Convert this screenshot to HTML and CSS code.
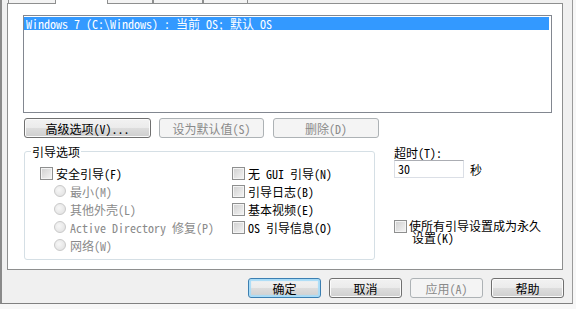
FILE: index.html
```html
<!DOCTYPE html>
<html lang="zh-CN">
<head>
  <meta charset="UTF-8" />
  <title>系统配置 - 引导</title>
  <link rel="stylesheet" href="styles.css">
</head>
<body>
  <div class="window">
    <div class="tabs">
      <span class="tab t1"></span>
      <span class="tab active"></span>
      <span class="tab t3"></span>
      <span class="tab t4"></span>
      <span class="tab t5"></span>
    </div>

    <div class="panel">
      <div class="oslist">
        <div class="osrow">Windows 7 (C:\Windows) : 当前 OS; 默认 OS</div>
      </div>

      <div class="listbtns">
        <button class="btn b-adv">高级选项(V)...</button>
        <button class="btn b-def" disabled>设为默认值(S)</button>
        <button class="btn b-del" disabled>删除(D)</button>
      </div>

      <div class="lower">
        <fieldset class="group">
          <legend>引导选项</legend>
          <div class="opts">
            <div class="col">
              <label class="chk"><span class="box"></span>安全引导(F)</label>
              <label class="rad"><span class="dot"></span>最小(M)</label>
              <label class="rad"><span class="dot"></span>其他外壳(L)</label>
              <label class="rad"><span class="dot"></span>Active Directory 修复(P)</label>
              <label class="rad"><span class="dot"></span>网络(W)</label>
            </div>
            <div class="col">
              <label class="chk"><span class="box"></span>无 GUI 引导(N)</label>
              <label class="chk"><span class="box"></span>引导日志(B)</label>
              <label class="chk"><span class="box"></span>基本视频(E)</label>
              <label class="chk"><span class="box"></span>OS 引导信息(O)</label>
            </div>
          </div>
        </fieldset>

        <div class="side">
          <div class="tlabel">超时(T):</div>
          <div class="trow">
            <span class="tinput">30</span>
            <span class="unit">秒</span>
          </div>
          <label class="chk perm"><span class="box"></span><span class="ptext">使所有引导设置成为永久设置(K)</span></label>
        </div>
      </div>
    </div>

    <div class="actions">
      <button class="btn default">确定</button>
      <button class="btn">取消</button>
      <button class="btn" disabled>应用(A)</button>
      <button class="btn">帮助</button>
    </div>
  </div>
</body>
</html>
```

FILE: styles.css
```css
body {
  margin: 0;
  background: #f7f7f7;
  font-family: "Noto Sans Mono CJK SC", "Noto Sans CJK SC", "Liberation Mono", monospace;
  font-size: 12px;
  color: #000;
}
.window {
  width: 573px;
  height: 304px;
  box-sizing: border-box;
  background: #f0f0f0;
  border-left: 2px solid #8a8a8a;
  border-right: 1px solid #9a9a9a;
  border-bottom: 1px solid #808080;
}

/* tab strip, only the bottom of it shows */
.tabs {
  display: flex;
  align-items: flex-end;
  height: 3px;
  margin-left: 6px;
}
.tab {
  height: 3px;
  box-sizing: border-box;
  background: #f3f3f3;
  border-left: 1px solid #8e8f8f;
  border-right: 1px solid #8e8f8f;
}
.t1 { width: 48px; }
.tab.active {
  width: 51px;
  height: 4px;
  margin-bottom: -1px;
  background: #fff;
  border: none;
  position: relative;
  z-index: 1;
}
.t3 { width: 46px; }
.t4 { width: 50px; }
.t5 { width: 45px; }

.panel {
  margin-left: 5px;
  width: 556px;
  height: 267px;
  box-sizing: border-box;
  background: #fff;
  border: 1px solid #8e8f8f;
  padding: 11px 10px 0 15px;
}
.oslist {
  width: 529px;
  height: 98px;
  box-sizing: border-box;
  border: 1px solid #828790;
  padding: 1px 2px 0 0;
}
.osrow {
  height: 13px;
  line-height: 13px;
  padding-left: 2px;
  background: #3399ff;
  color: #fff;
  white-space: pre;
}

.btn {
  height: 20px;
  padding: 0;
  font: inherit;
  color: #000;
  border: 1px solid #707070;
  border-radius: 3px;
  background: linear-gradient(#f2f2f2 0%, #ebebeb 50%, #dddddd 50%, #cfcfcf 100%);
  box-shadow: inset 0 0 0 1px #fbfbfb;
}
.btn:disabled {
  color: #8a8a8a;
  border-color: #adb2b5;
  background: #f4f4f4;
  box-shadow: none;
}
.btn.default {
  border-color: #3c7fb1;
  box-shadow: inset 0 0 1px 2px #a8dcf8;
}

.listbtns {
  display: flex;
  margin: 5px 0 0 1px;
}
.b-adv { width: 127px; }
.b-def { width: 105px; margin-left: 8px; }
.b-del { width: 106px; margin-left: 9px; }

.lower {
  display: flex;
  margin-top: 7px;
}
.group {
  margin: 0 0 0 1px;
  width: 355px;
  box-sizing: border-box;
  min-width: 0;
  padding: 0 0 5px 0;
  border: 1px solid #d5dfe5;
  border-radius: 3px;
}
.group legend {
  margin-left: 6px;
  padding: 0 1px;
  line-height: 13px;
}
.opts {
  display: grid;
  grid-template-columns: 192px 1fr;
  padding: 6px 0 0 15px;
}
.col {
  display: flex;
  flex-direction: column;
}
.chk, .rad {
  display: flex;
  align-items: center;
  height: 18px;
  white-space: nowrap;
}
.box {
  width: 13px;
  height: 13px;
  box-sizing: border-box;
  margin-right: 3px;
  border: 1px solid #8e8f8f;
  background: linear-gradient(135deg, #cfcfcf, #f5f5f5);
  box-shadow: inset 0 0 0 1px #f4f4f4;
  flex: none;
}
.rad {
  padding-left: 14px;
  color: #8a8a8a;
}
.dot {
  width: 12px;
  height: 12px;
  box-sizing: border-box;
  margin-right: 4px;
  border: 1px solid #c9c9c9;
  border-radius: 50%;
  background: radial-gradient(circle at 40% 40%, #f7f7f7, #dedede);
  flex: none;
}

.side {
  margin-left: 19px;
  padding-top: 1px;
}
.tlabel {
  line-height: 13px;
}
.trow {
  display: flex;
  align-items: center;
  margin-top: 1px;
}
.tinput {
  width: 70px;
  height: 18px;
  box-sizing: border-box;
  padding-left: 3px;
  line-height: 16px;
  border: 1px solid #dbdfe6;
  border-top-color: #abadb3;
}
.unit {
  margin-left: 6px;
}
.perm {
  align-items: flex-start;
  height: auto;
  margin-top: 42px;
  white-space: normal;
}
.perm .box {
  margin-right: 2px;
}
.ptext {
  width: 140px;
  line-height: 12px;
  padding-left: 3px;
  text-indent: -3px;
}

.actions {
  display: flex;
  justify-content: flex-end;
  gap: 8px;
  margin-top: 8px;
  padding-right: 8px;
}
.actions .btn {
  width: 73px;
}
```
